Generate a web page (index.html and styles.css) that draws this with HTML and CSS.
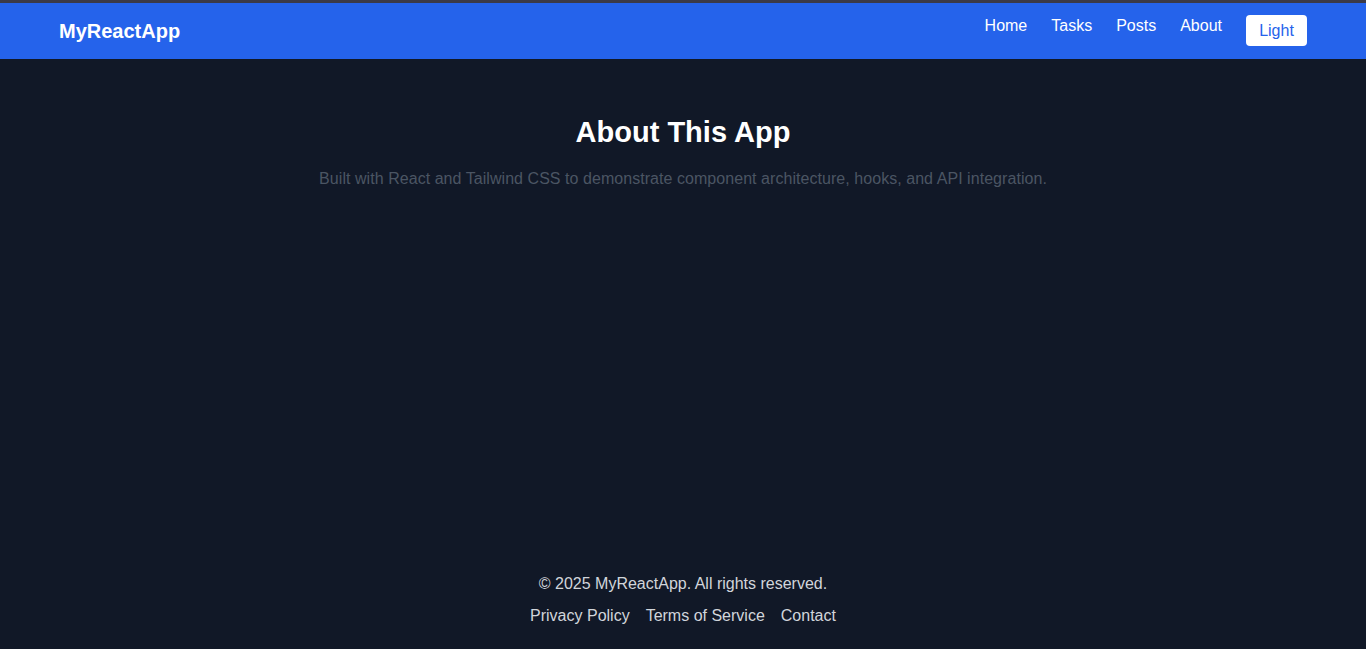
FILE: index.html
```html
<!DOCTYPE html>
<html lang="en">
<head>
<meta charset="utf-8">
<title>MyReactApp</title>
<link rel="stylesheet" href="styles.css">
</head>
<body>
<div class="app">
  <header class="navbar">
    <div class="nav-inner">
      <a class="brand" href="#">MyReactApp</a>
      <nav class="nav-right">
        <a class="nav-link" href="#">Home</a>
        <a class="nav-link" href="#">Tasks</a>
        <a class="nav-link" href="#">Posts</a>
        <a class="nav-link" href="#">About</a>
        <button class="theme-btn" type="button">Light</button>
      </nav>
    </div>
  </header>
  <main class="main">
    <section class="about">
      <h1 class="about-title">About This App</h1>
      <p class="about-text">Built with React and Tailwind CSS to demonstrate component architecture, hooks, and API integration.</p>
    </section>
  </main>
  <footer class="footer">
    <p class="copy">© 2025 MyReactApp. All rights reserved.</p>
    <div class="footer-links">
      <a href="#">Privacy Policy</a>
      <a href="#">Terms of Service</a>
      <a href="#">Contact</a>
    </div>
  </footer>
</div>
</body>
</html>
```

FILE: styles.css
```css
* { box-sizing: border-box; }
html, body { margin: 0; padding: 0; }
body {
  font-family: "Liberation Sans", Arial, sans-serif;
  background: #111827;
  color: #ffffff;
  font-size: 16px;
  line-height: 24px;
}
a { text-decoration: none; color: inherit; }
.app {
  min-height: 649px;
  display: flex;
  flex-direction: column;
  border-top: 3px solid #3b3a48;
}
.navbar {
  background: #2563eb;
  padding: 12px 0 13px;
}
.nav-inner {
  max-width: 1280px;
  margin: 0 auto;
  padding: 0 16px;
  display: flex;
  align-items: center;
  justify-content: space-between;
}
.brand {
  font-weight: 700;
  font-size: 20px;
  line-height: 28px;
  color: #ffffff;
}
.nav-right {
  display: flex;
  align-items: flex-start;
  gap: 24px;
}
.nav-link {
  color: #ffffff;
  font-size: 16px;
  line-height: 22px;
}
.theme-btn {
  font-family: inherit;
  font-size: 16px;
  line-height: 23px;
  background: #ffffff;
  color: #2563eb;
  border: 0;
  border-radius: 4px;
  padding: 4px 11px;
  height: 31px;
  width: 61px;
}
.main {
  flex: 1;
  padding-top: 55px;
}
.about {
  text-align: center;
}
.about-title {
  margin: 0 0 15px;
  font-size: 29px;
  line-height: 36px;
  font-weight: 700;
  color: #ffffff;
}
.about-text {
  margin: 0;
  font-size: 16px;
  line-height: 28px;
  letter-spacing: 0.05px;
  color: #4b5563;
}
.footer {
  padding: 24px 0 21px;
  text-align: center;
  color: #d1d5db;
}
.copy {
  margin: 0 0 8px;
}
.footer-links {
  display: flex;
  justify-content: center;
  gap: 16px;
}
```
